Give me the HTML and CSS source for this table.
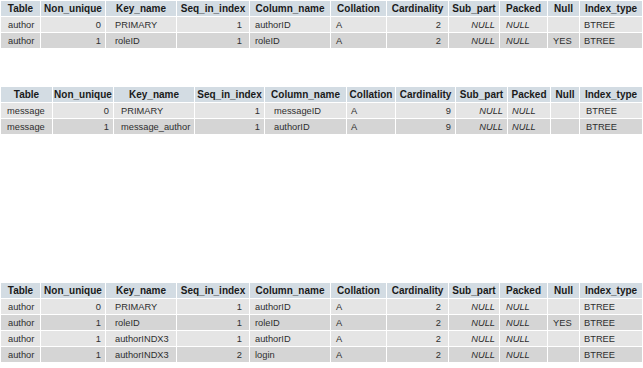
FILE: index.html
```html
<!DOCTYPE html>
<html>
<head>
<meta charset="utf-8">
<link rel="stylesheet" href="styles.css">
</head>
<body>
<div class="page">
  <table class="idx wide">
    <colgroup>
      <col class="c1"><col class="c2"><col class="c3"><col class="c4"><col class="c5"><col class="c6"><col class="c7"><col class="c8"><col class="c9"><col class="c10"><col class="c11">
    </colgroup>
    <thead>
      <tr><th>Table</th><th>Non_unique</th><th>Key_name</th><th>Seq_in_index</th><th>Column_name</th><th>Collation</th><th>Cardinality</th><th>Sub_part</th><th>Packed</th><th>Null</th><th>Index_type</th></tr>
    </thead>
    <tbody>
      <tr class="odd"><td>author</td><td>0</td><td>PRIMARY</td><td>1</td><td>authorID</td><td>A</td><td>2</td><td class="null">NULL</td><td class="null">NULL</td><td></td><td>BTREE</td></tr>
      <tr class="even"><td>author</td><td>1</td><td>roleID</td><td>1</td><td>roleID</td><td>A</td><td>2</td><td class="null">NULL</td><td class="null">NULL</td><td>YES</td><td>BTREE</td></tr>
    </tbody>
  </table>

  <table class="idx msg">
    <colgroup>
      <col class="c1"><col class="c2"><col class="c3"><col class="c4"><col class="c5"><col class="c6"><col class="c7"><col class="c8"><col class="c9"><col class="c10"><col class="c11">
    </colgroup>
    <thead>
      <tr><th>Table</th><th>Non_unique</th><th>Key_name</th><th>Seq_in_index</th><th>Column_name</th><th>Collation</th><th>Cardinality</th><th>Sub_part</th><th>Packed</th><th>Null</th><th>Index_type</th></tr>
    </thead>
    <tbody>
      <tr class="odd"><td>message</td><td>0</td><td>PRIMARY</td><td>1</td><td>messageID</td><td>A</td><td>9</td><td class="null">NULL</td><td class="null">NULL</td><td></td><td>BTREE</td></tr>
      <tr class="even"><td>message</td><td>1</td><td>message_author</td><td>1</td><td>authorID</td><td>A</td><td>9</td><td class="null">NULL</td><td class="null">NULL</td><td></td><td>BTREE</td></tr>
    </tbody>
  </table>

  <table class="idx wide third">
    <colgroup>
      <col class="c1"><col class="c2"><col class="c3"><col class="c4"><col class="c5"><col class="c6"><col class="c7"><col class="c8"><col class="c9"><col class="c10"><col class="c11">
    </colgroup>
    <thead>
      <tr><th>Table</th><th>Non_unique</th><th>Key_name</th><th>Seq_in_index</th><th>Column_name</th><th>Collation</th><th>Cardinality</th><th>Sub_part</th><th>Packed</th><th>Null</th><th>Index_type</th></tr>
    </thead>
    <tbody>
      <tr class="odd"><td>author</td><td>0</td><td>PRIMARY</td><td>1</td><td>authorID</td><td>A</td><td>2</td><td class="null">NULL</td><td class="null">NULL</td><td></td><td>BTREE</td></tr>
      <tr class="even"><td>author</td><td>1</td><td>roleID</td><td>1</td><td>roleID</td><td>A</td><td>2</td><td class="null">NULL</td><td class="null">NULL</td><td>YES</td><td>BTREE</td></tr>
      <tr class="odd"><td>author</td><td>1</td><td>authorINDX3</td><td>1</td><td>authorID</td><td>A</td><td>2</td><td class="null">NULL</td><td class="null">NULL</td><td></td><td>BTREE</td></tr>
      <tr class="even"><td>author</td><td>1</td><td>authorINDX3</td><td>2</td><td>login</td><td>A</td><td>2</td><td class="null">NULL</td><td class="null">NULL</td><td></td><td>BTREE</td></tr>
    </tbody>
  </table>
</div>
</body>
</html>
```

FILE: styles.css
```css
html, body {
  margin: 0;
  padding: 0;
  background: #ffffff;
}

.page {
  display: flex;
  flex-direction: column;
  align-items: flex-start;
}

.idx {
  table-layout: fixed;
  width: 643px;
  border-collapse: separate;
  border-spacing: 1px;
  background: #ffffff;
  font-family: "Liberation Sans", Arial, sans-serif;
}

.msg { margin-top: 37px; }
.third { margin-top: 147px; }

.idx th {
  height: 15px;
  padding: 0;
  background: #d3dce3;
  color: #1a1a1a;
  font-size: 10px;
  font-weight: bold;
  text-align: center;
  white-space: nowrap;
  overflow: visible;
}

.idx td {
  height: 15px;
  padding: 0;
  color: #2e2e2e;
  font-size: 9.3px;
  white-space: nowrap;
  text-align: left;
}

.idx tr.odd td { background: #e5e5e5; }
.idx tr.even td { background: #d5d5d5; }

.idx td.null { font-style: italic; }

/* numeric columns */
.idx td:nth-child(2),
.idx td:nth-child(4),
.idx td:nth-child(7),
.idx td:nth-child(8) { text-align: right; }

/* ---- author tables ---- */
.wide .c1 { width: 39px; }
.wide .c2 { width: 64px; }
.wide .c3 { width: 70px; }
.wide .c4 { width: 72px; }
.wide .c5 { width: 80px; }
.wide .c6 { width: 55px; }
.wide .c7 { width: 61px; }
.wide .c8 { width: 50px; }
.wide .c9 { width: 47px; }
.wide .c10 { width: 31px; }
.wide .c11 { width: 62px; }

.wide td:nth-child(1) { padding-left: 7px; }
.wide td:nth-child(2) { padding-right: 4px; }
.wide td:nth-child(3) { padding-left: 9px; }
.wide td:nth-child(4) { padding-right: 7px; }
.wide td:nth-child(5) { padding-left: 5px; }
.wide td:nth-child(6) { padding-left: 5px; }
.wide td:nth-child(7) { padding-right: 7px; }
.wide td:nth-child(8) { padding-right: 4px; }
.wide td:nth-child(9) { padding-left: 6px; }
.wide td:nth-child(10) { padding-left: 5px; }
.wide td:nth-child(11) { padding-left: 4px; }

/* ---- message table ---- */
.msg .c1 { width: 51px; }
.msg .c2 { width: 60px; }
.msg .c3 { width: 80px; }
.msg .c4 { width: 69px; }
.msg .c5 { width: 81px; }
.msg .c6 { width: 48px; }
.msg .c7 { width: 59px; }
.msg .c8 { width: 51px; }
.msg .c9 { width: 42px; }
.msg .c10 { width: 28px; }
.msg .c11 { width: 62px; }

.msg td:nth-child(1) { padding-left: 6px; }
.msg td:nth-child(2) { padding-right: 4px; }
.msg td:nth-child(3) { padding-left: 7px; }
.msg td:nth-child(4) { padding-right: 4px; }
.msg td:nth-child(5) { padding-left: 9px; }
.msg td:nth-child(6) { padding-left: 4px; }
.msg td:nth-child(7) { padding-right: 4px; }
.msg td:nth-child(8) { padding-right: 4px; }
.msg td:nth-child(9) { padding-left: 4px; }
.msg td:nth-child(10) { padding-left: 4px; }
.msg td:nth-child(11) { padding-left: 6px; }
```
